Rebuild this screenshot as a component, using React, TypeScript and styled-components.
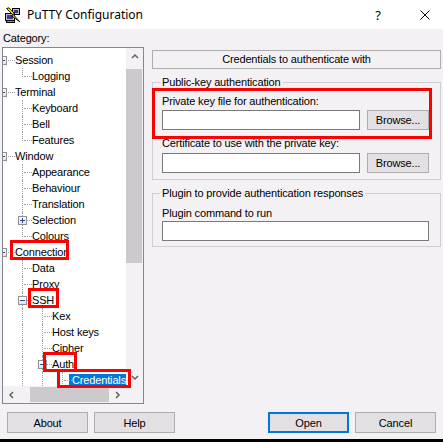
import React from 'react';
import styled, { createGlobalStyle, css } from 'styled-components';

const Global = createGlobalStyle`
  html, body { margin: 0; padding: 0; background: #000; }
  body { font-family: "Liberation Sans", Arial, sans-serif; font-size: 11px; letter-spacing: -0.15px; color: #000; }
  * { box-sizing: border-box; }
`;

const BG = '#f4f1f4';
const DOT = '#a0a0a0';

const Window = styled.div`
  position: relative;
  width: 443px;
  height: 439px;
  background: ${BG};
  display: flex;
  flex-direction: column;
  overflow: hidden;
`;

const TitleBar = styled.div`
  height: 29px;
  flex: none;
  background: #fff;
  display: flex;
  align-items: center;
  padding: 0 8px 0 5px;
  font-family: "Noto Sans", "Open Sans", sans-serif;
  font-size: 12px;
  letter-spacing: 0;
  white-space: nowrap;
`;

const TitleText = styled.span`
  margin-left: 6px;
  line-height: 16px;
  flex: none;
`;

const CaptionButton = styled.span<{ $gap?: number; $auto?: boolean }>`
  width: 20px;
  height: 20px;
  flex: none;
  display: flex;
  align-items: center;
  justify-content: center;
  margin-left: ${p => (p.$auto ? 'auto' : `${p.$gap ?? 0}px`)};
  font-size: 13px;
`;

const Main = styled.div`
  flex: none;
  height: 375px;
  display: flex;
  padding-left: 2px;
`;

const Sidebar = styled.div`
  width: 142px;
  flex: none;
  display: flex;
  flex-direction: column;
`;

const CategoryLabel = styled.div`
  margin-top: 3px;
  padding-left: 1px;
  line-height: 13px;
`;

const Tree = styled.div`
  margin-top: 2px;
  height: 357px;
  border: 1px solid #828790;
  background: #fff;
  display: grid;
  grid-template-columns: 1fr 17px;
  grid-template-rows: 1fr 17px;
`;

const TreeContent = styled.div`
  overflow: hidden;
  padding-top: 4px;
`;

const TreeList = styled.div`
  margin-left: -10px;
  display: flex;
  flex-direction: column;
`;

const TreeRow = styled.div`
  height: 16px;
  display: flex;
  align-items: center;
  white-space: nowrap;
`;

const Guide = styled.span<{ $line: boolean }>`
  position: relative;
  width: 20px;
  height: 16px;
  flex: none;
  ${p => p.$line && css`
    &::before {
      content: '';
      position: absolute;
      left: 9px;
      top: 0;
      height: 16px;
      border-left: 1px dotted ${DOT};
    }
  `}
`;

const Connector = styled.span<{ $last: boolean; $w: number }>`
  position: relative;
  width: ${p => p.$w}px;
  height: 16px;
  flex: none;
  &::before {
    content: '';
    position: absolute;
    left: 9px;
    top: 0;
    height: ${p => (p.$last ? 9 : 16)}px;
    border-left: 1px dotted ${DOT};
  }
  &::after {
    content: '';
    position: absolute;
    left: 11px;
    top: 8px;
    width: ${p => p.$w - 12}px;
    border-top: 1px dotted ${DOT};
  }
`;

const Expander = styled.span<{ $plus: boolean }>`
  position: absolute;
  left: 5px;
  top: 4px;
  width: 9px;
  height: 9px;
  border: 1px solid #919191;
  background: linear-gradient(#ffffff, #e4e4e4);
  z-index: 1;
  &::before {
    content: '';
    position: absolute;
    left: 1px;
    top: 3px;
    width: 5px;
    height: 1px;
    background: #2b4c8c;
  }
  ${p => p.$plus && css`
    &::after {
      content: '';
      position: absolute;
      left: 3px;
      top: 1px;
      width: 1px;
      height: 5px;
      background: #2b4c8c;
    }
  `}
`;

const NodeLabel = styled.span<{ $selected?: boolean }>`
  margin-left: -4px;
  padding: 0 2px 0 3px;
  line-height: 13px;
  ${p => p.$selected && css`
    background: #0078d7;
    color: #fff;
  `}
`;

const ScrollV = styled.div`
  background: ${BG};
  display: grid;
  grid-template-rows: 17px 1fr 17px;
`;

const ScrollH = styled.div`
  background: ${BG};
  display: grid;
  grid-template-columns: 17px 1fr 17px;
`;

const Corner = styled.div`
  background: ${BG};
`;

const ArrowBtn = styled.div`
  display: flex;
  align-items: center;
  justify-content: center;
`;

const TrackV = styled.div`
  position: relative;
`;

const ThumbV = styled.div`
  margin: 4px 1px 0 0;
  height: 194px;
  background: #cdcacd;
`;

const TrackH = styled.div`
  display: flex;
  align-items: stretch;
`;

const ThumbH = styled.div`
  margin: 1px 0 1px 10px;
  width: 79px;
  background: #cdcacd;
`;

const Panel = styled.div`
  margin-left: 8px;
  width: 289px;
  flex: none;
  padding-top: 21px;
  display: flex;
  flex-direction: column;
`;

const Header = styled.div`
  height: 19px;
  border: 1px solid #adadad;
  text-align: center;
  line-height: 17px;
`;

const Group = styled.fieldset<{ $bottom: number }>`
  display: block;
  margin: 7px 0 0;
  padding: 0 11px ${p => p.$bottom}px 9px;
  border: 1px solid #d2cfd2;
  min-inline-size: auto;
`;

const Legend = styled.legend`
  margin-left: -2px;
  padding: 0 2px;
  line-height: 13px;
`;

const FieldLabel = styled.div<{ $top: number }>`
  margin-top: ${p => p.$top}px;
  line-height: 13px;
`;

const FieldRow = styled.div<{ $top: number }>`
  margin-top: ${p => p.$top}px;
  display: flex;
  gap: 7px;
`;

const TextBox = styled.div<{ $top?: number }>`
  flex: 1;
  height: 20px;
  margin-top: ${p => p.$top ?? 0}px;
  border: 1px solid #7a7a7a;
  background: #fff;
`;

const Button = styled.div<{ $default?: boolean; $push?: boolean; $w?: number; $h?: number }>`
  width: ${p => p.$w ?? 81}px;
  height: ${p => p.$h ?? 21}px;
  flex: none;
  display: flex;
  align-items: center;
  justify-content: center;
  background: #e3e0e3;
  border: 1px solid #adadad;
  ${p => p.$push && css`margin-left: auto;`}
  ${p => p.$default && css`border: 2px solid #0078d7;`}
`;

const Footer = styled.div`
  margin-top: 8px;
  display: flex;
  gap: 6px;
  padding: 0 7px;
`;

const Mark = styled.div<{ $x: number; $y: number; $w: number; $h: number }>`
  position: absolute;
  left: ${p => p.$x}px;
  top: ${p => p.$y}px;
  width: ${p => p.$w}px;
  height: ${p => p.$h}px;
  border: 3px solid #ff0000;
  z-index: 5;
  pointer-events: none;
`;

const PuttyIcon = () => (
  <svg width="16" height="16" viewBox="0 0 16 16" style={{ flex: 'none' }}>
    <rect x="7.5" y="1.5" width="7" height="6" fill="#c0c0c0" stroke="#000" />
    <rect x="9" y="3" width="4" height="3" fill="#3c3c8c" />
    <rect x="0.5" y="6.5" width="9" height="7" fill="#c0c0c0" stroke="#000" />
    <rect x="2" y="8" width="6" height="4" fill="#3c3c8c" />
    <rect x="1.5" y="13.5" width="8" height="2" fill="#9a9a9a" stroke="#000" />
    <path d="M1.5 1.5 L4 0.8 L9.5 6.5 L8 7.2 L14.8 14.8 L6.5 8.8 L8 8 Z" fill="#ffe000" stroke="#000" strokeWidth="0.9" strokeLinejoin="round" />
  </svg>
);

const Chevron = ({ dir }: { dir: 'up' | 'down' | 'left' | 'right' }) => {
  const pts = {
    up: '1,5 4,2 7,5',
    down: '1,2 4,5 7,2',
    left: '5,1 2,4 5,7',
    right: '2,1 5,4 2,7',
  }[dir];
  return (
    <svg width="8" height="8" viewBox="0 0 8 8">
      <polyline points={pts} fill="none" stroke="#606060" strokeWidth="1.5" />
    </svg>
  );
};

const CloseIcon = () => (
  <svg width="10" height="10" viewBox="0 0 10 10">
    <path d="M0.5 0.5 L9.5 9.5 M9.5 0.5 L0.5 9.5" stroke="#000" strokeWidth="1" />
  </svg>
);

type Node = {
  label: string;
  level: number;
  last?: boolean;
  exp?: 'plus' | 'minus';
  selected?: boolean;
};

const nodes: Node[] = [
  { label: 'Session', level: 0, exp: 'minus' },
  { label: 'Logging', level: 1, last: true },
  { label: 'Terminal', level: 0, exp: 'minus' },
  { label: 'Keyboard', level: 1 },
  { label: 'Bell', level: 1 },
  { label: 'Features', level: 1, last: true },
  { label: 'Window', level: 0, exp: 'minus' },
  { label: 'Appearance', level: 1 },
  { label: 'Behaviour', level: 1 },
  { label: 'Translation', level: 1 },
  { label: 'Selection', level: 1, exp: 'plus' },
  { label: 'Colours', level: 1, last: true },
  { label: 'Connection', level: 0, exp: 'minus' },
  { label: 'Data', level: 1 },
  { label: 'Proxy', level: 1 },
  { label: 'SSH', level: 1, exp: 'minus' },
  { label: 'Kex', level: 2 },
  { label: 'Host keys', level: 2 },
  { label: 'Cipher', level: 2 },
  { label: 'Auth', level: 2, exp: 'minus' },
  { label: 'Credentials', level: 3, selected: true },
];

export default function App() {
  return (
    <>
      <Global />
      <Window>
        <TitleBar>
          <PuttyIcon />
          <TitleText>PuTTY Configuration</TitleText>
          <CaptionButton $auto>?</CaptionButton>
          <CaptionButton $gap={27}>
            <CloseIcon />
          </CaptionButton>
        </TitleBar>
        <Main>
          <Sidebar>
            <CategoryLabel>Category:</CategoryLabel>
            <Tree>
              <TreeContent>
                <TreeList>
                  {nodes.map(n => (
                    <TreeRow key={n.label}>
                      {Array.from({ length: n.level }).map((_, i) => (
                        <Guide key={i} $line />
                      ))}
                      <Connector $last={!!n.last} $w={n.level === 0 ? 23 : 20}>
                        {n.exp && <Expander $plus={n.exp === 'plus'} />}
                      </Connector>
                      <NodeLabel $selected={n.selected}>{n.label}</NodeLabel>
                    </TreeRow>
                  ))}
                </TreeList>
              </TreeContent>
              <ScrollV>
                <ArrowBtn><Chevron dir="up" /></ArrowBtn>
                <TrackV><ThumbV /></TrackV>
                <ArrowBtn><Chevron dir="down" /></ArrowBtn>
              </ScrollV>
              <ScrollH>
                <ArrowBtn><Chevron dir="left" /></ArrowBtn>
                <TrackH><ThumbH /></TrackH>
                <ArrowBtn><Chevron dir="right" /></ArrowBtn>
              </ScrollH>
              <Corner />
            </Tree>
          </Sidebar>
          <Panel>
            <Header>Credentials to authenticate with</Header>
            <Group $bottom={6}>
              <Legend>Public-key authentication</Legend>
              <FieldLabel $top={6}>Private key file for authentication:</FieldLabel>
              <FieldRow $top={2}>
                <TextBox />
                <Button $w={62} $h={20}>Browse...</Button>
              </FieldRow>
              <FieldLabel $top={7}>Certificate to use with the private key:</FieldLabel>
              <FieldRow $top={3}>
                <TextBox />
                <Button $w={62} $h={20}>Browse...</Button>
              </FieldRow>
            </Group>
            <Group $bottom={5}>
              <Legend>Plugin to provide authentication responses</Legend>
              <FieldLabel $top={7}>Plugin command to run</FieldLabel>
              <TextBox $top={1} />
            </Group>
          </Panel>
        </Main>
        <Footer>
          <Button>About</Button>
          <Button>Help</Button>
          <Button $push $default>Open</Button>
          <Button>Cancel</Button>
        </Footer>
        <Mark $x={10} $y={240} $w={59} $h={20} />
        <Mark $x={28} $y={288} $w={31} $h={20} />
        <Mark $x={43} $y={352} $w={34} $h={20} />
        <Mark $x={57} $y={369} $w={74} $h={19} />
        <Mark $x={152} $y={88} $w={280} $h={51} />
      </Window>
    </>
  );
}
